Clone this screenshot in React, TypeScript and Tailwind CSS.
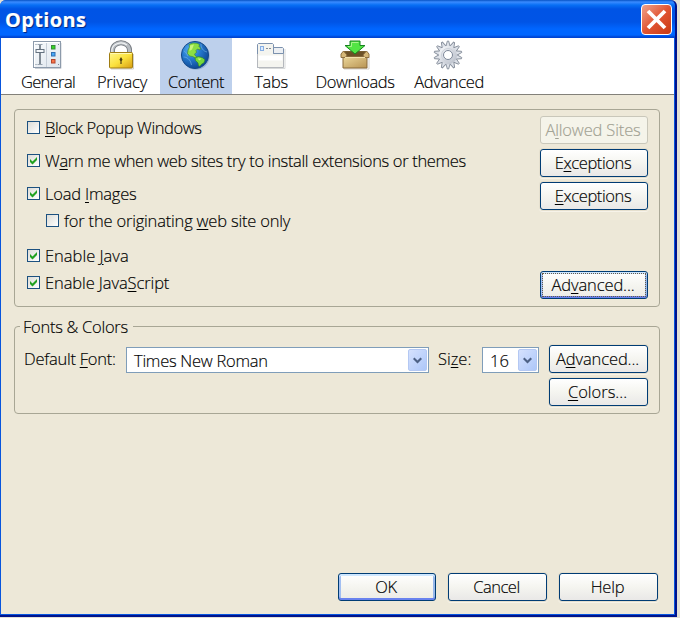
import type { ReactNode } from "react";

function Key({ children }: { children: ReactNode }) {
  return <span className="underline decoration-1 underline-offset-[2px]">{children}</span>;
}

function SlidersIcon() {
  return (
    <svg className="mr-[3px]" width="30" height="30" viewBox="0 0 30 30">
      <defs>
        <linearGradient id="panel" x2="1" y2="1">
          <stop stopColor="#f8fbfd" />
          <stop offset="1" stopColor="#dfe5ec" />
        </linearGradient>
      </defs>
      <path d="M3 28.500h26V3" fill="none" stroke="#ccd0d6" />
      <rect x="1.500" y="1.500" width="27" height="26" fill="url(#panel)" stroke="#8c9aab" />
      <path d="M14.500 2v25" stroke="#c6ced8" />
      <path d="M2.500 2.500h25M2.500 3v24" stroke="#fff" />
      <path d="M8 4v21" stroke="#5c6874" strokeWidth="1.500" />
      <path d="M5.500 4.500h5M5.500 24.500h5" stroke="#97a2ae" />
      <rect x="4" y="9.500" width="8" height="3" fill="#f4f7fa" stroke="#657280" />
      <rect x="19.500" y="5.500" width="3.500" height="3.500" fill="#35d623" stroke="#378b3a" />
      <rect x="19.500" y="12.500" width="3.500" height="3.500" fill="#48a8f6" stroke="#336fb2" />
      <rect x="19.500" y="19.500" width="3.500" height="3.500" fill="#f8744a" stroke="#b4452b" />
      <path d="M3.500 4.500h1M3.500 24.500h1M26 4.500h1M26 24.500h1" stroke="#7c8996" />
    </svg>
  );
}

function PadlockIcon() {
  return (
    <svg className="mr-[2px]" width="26" height="30" viewBox="0 0 26 30">
      <defs>
        <linearGradient id="brass" x2="1" y2="1">
          <stop stopColor="#fff68c" />
          <stop offset=".5" stopColor="#fbe23e" />
          <stop offset="1" stopColor="#d79c12" />
        </linearGradient>
      </defs>
      <path d="M4.500 15v-5a8.500 7.200 0 0 1 17 0v5" fill="none" stroke="#70757b" strokeWidth="5" />
      <path d="M4.500 15v-5a8.500 7.200 0 0 1 17 0v5" fill="none" stroke="#b7bcc1" strokeWidth="3.400" />
      <path d="M3.900 13v-3.500a9 7.500 0 0 1 15-4.500" fill="none" stroke="#f1f3f4" strokeWidth="1.200" />
      <path d="M3 29h22.500V14" fill="none" stroke="#cfcfcb" />
      <rect x="1.500" y="12.500" width="23" height="15.500" rx="1" fill="url(#brass)" stroke="#a07d12" />
      <path d="M2.500 13.500h21" stroke="#fff9b5" />
      <path d="M13 17l1.600 2.700-1 1.300v3h-1.200v-3l-1-1.300z" fill="#493c13" />
    </svg>
  );
}

function GlobeIcon() {
  return (
    <svg className="mr-[2px]" width="30" height="30" viewBox="0 0 30 30">
      <defs>
        <radialGradient id="ocean" cx=".35" cy=".3" r=".75">
          <stop stopColor="#62b8f2" />
          <stop offset=".45" stopColor="#267bd0" />
          <stop offset="1" stopColor="#0c438f" />
        </radialGradient>
      </defs>
      <circle cx="16" cy="16" r="13.800" fill="#7f9cc5" opacity=".6" />
      <circle cx="15" cy="15" r="13.600" fill="url(#ocean)" stroke="#174b8b" />
      <path d="M3.500 17c3 0 7 2 8 8M21 4c0 4 2 7 6 8M4 11c2 1 3 3 4 5" fill="none" stroke="#79b9e8" opacity=".6" />
      <path d="M9 4.500l4-1.500 4 .3 2.500 1.200-.5 2 1.500 1.500-.5 2-2.500-1-1.500 1.500.5 2-2 1.500 1 2 2 1.500-1.500.8-3.500-1.800-3-.5-2-2.500.5-3.500 1.500-3z" fill="#8cdf45" stroke="#39852a" strokeWidth=".6" />
      <path d="M15 18l3.500-1.500 4 1.200 2.500 2-1 3-2.500 1.500-1.500 2-1.500-.2-.5-3-2.500-2.500z" fill="#77d83a" stroke="#297c28" strokeWidth=".6" />
      <path d="M10 5.500l4-1-2 5-2.500 1.500zM17.500 18.500l4 0-2 2z" fill="#c7f57b" />
    </svg>
  );
}

function TabsIcon() {
  return (
    <svg className="mt-[2px] mr-px" width="30" height="28" viewBox="0 2 30 28">
      <path d="M3 28.500h26V9" fill="none" stroke="#d7d9d9" />
      <path d="M1.500 27.500v-23l1-1h14l1 1v3h10v20z" fill="#f4f4ef" />
      <path d="M1.500 27.500v-23l1-1h14l1 1v9h10" fill="none" stroke="#7b91ae" />
      <path d="M17.500 7.500h9l1 1v5h-10z" fill="#eceff3" stroke="#7b91ae" />
      <path d="M1.500 14v13.500h26V14" fill="none" stroke="#b5b8bd" />
      <path d="M2.500 15.500h24v5h-24z" fill="#fff" />
      <rect x="4.500" y="6.500" width="3" height="4" fill="#dcecff" stroke="#86aee4" />
      <path d="M10 8.500h2m1 0h2" stroke="#858e9a" />
    </svg>
  );
}

function DownloadIcon() {
  return (
    <svg className="mr-px" width="32" height="30" viewBox="0 0 32 30">
      <defs>
        <linearGradient id="carton" x2="1" y2="1">
          <stop stopColor="#ecd89c" />
          <stop offset="1" stopColor="#b89352" />
        </linearGradient>
      </defs>
      <path d="M5 29h25V17" fill="none" stroke="#d6d2cb" />
      <path d="M4.500 11.500h23l-1 5h-21z" fill="#6c5127" stroke="#795d31" />
      <path d="M4 16.500h24V28H4z" fill="url(#carton)" stroke="#87683a" />
      <path d="M4.500 11l-2.500 3v3.500h4.500l1.500-2.500zM27.500 11l2.500 3v3.500h-4.500l-1.500-2.500z" fill="#d6b878" stroke="#8f7041" />
      <path d="M6 17.500h20" stroke="#f3e1ad" />
      <path d="M11 1h10v4.500h5L16 14 6 5.500h5z" fill="#52e544" stroke="#178420" />
      <path d="M12.500 2.500h7M9 6.500h3.500v-4" fill="none" stroke="#a7f48c" />
    </svg>
  );
}

function GearIcon() {
  return (
    <svg className="mr-[2px]" width="30" height="30" viewBox="0 0 30 30">
      <defs>
        <linearGradient id="steel" x2="1" y2="1">
          <stop stopColor="#fafbfd" />
          <stop offset="1" stopColor="#b4bac6" />
        </linearGradient>
      </defs>
      <g fill="#dde1e8" stroke="#858d9a" strokeWidth=".9">
        {[0, 25.7, 51.4, 77.1, 102.9, 128.6, 154.3, 180, 205.7, 231.4, 257.1, 282.9, 308.6, 334.3].map((angle) => (
          <path key={angle} d="M12.800 6.300l1.600-5.300h1.200l1.600 5.300" transform={`rotate(${angle} 15 15)`} />
        ))}
      </g>
      <circle cx="15" cy="15" r="9.200" fill="url(#steel)" />
      <circle cx="15" cy="15" r="6.500" fill="none" stroke="#ccd1da" />
      <circle cx="15" cy="15" r="4.500" fill="#fff" stroke="#7d8798" />
    </svg>
  );
}

function ToolItem({ icon, label, className, active = false }: { icon: ReactNode; label: string; className: string; active?: boolean }) {
  return (
    <div className={`flex h-[56px] flex-col items-center ${active ? "bg-[#bdd0ec]" : ""} ${className}`}>
      <div className="flex h-[33px] items-center">{icon}</div>
      <div className="whitespace-nowrap leading-[22px]">{label}</div>
    </div>
  );
}

function Check({ checked = false, className = "", children }: { checked?: boolean; className?: string; children: ReactNode }) {
  return (
    <label className={`flex h-[13px] items-start gap-[5px] ${className}`}>
      <span className="flex size-[13px] shrink-0 items-center justify-center border border-[#1c5180] bg-linear-to-br from-[#dcdcd7] to-white">
        {checked && (
          <svg width="9" height="9" viewBox="0 0 9 9">
            <path d="M1 3v3l2.500 2.500L8 4V1L3.500 5.500z" fill="#21a121" />
          </svg>
        )}
      </span>
      <span className="whitespace-nowrap leading-[13px]">{children}</span>
    </label>
  );
}

function Button({ children, className = "", kind = "normal" }: { children: ReactNode; className?: string; kind?: "normal" | "default" | "focused" | "disabled" }) {
  const look = {
    normal: "border-[#003c74] bg-linear-to-b from-white via-[#f5f5f0] to-[#e9e8e7] shadow-[0_0_0_1px_#e5dfce,0_1px_0_1px_#f7f3e9]",
    default: "border-[#003c74] bg-linear-to-b from-white via-[#f5f5f0] to-[#ecebe6] shadow-[inset_0_2px_0_#cee7ff,inset_0_-2px_0_#6982ee,inset_2px_0_0_#a2bff2,inset_-2px_0_0_#98b8ea]",
    focused: "border-[#003c74] bg-linear-to-b from-white via-[#f5f5f0] to-[#ecebe6] shadow-[inset_0_2px_0_#cee7ff,inset_0_-2px_0_#6982ee,inset_2px_0_0_#a2bff2,inset_-2px_0_0_#98b8ea]",
    disabled: "border-[#c9c7ba] bg-[#f5f4ea] text-[#a1a192]",
  }[kind];
  return (
    <button className={`flex h-[28px] shrink-0 rounded-[3px] border p-px ${look} ${className}`}>
      <span className={`flex h-full w-full items-center justify-center pr-[2px] whitespace-nowrap leading-none ${kind === "focused" ? "border border-dotted border-[#655b4b]" : ""}`}>
        <span>{children}</span>
      </span>
    </button>
  );
}

function Combo({ value, className, textClass }: { value: string; className: string; textClass: string }) {
  return (
    <div className={`flex h-[26px] shrink-0 border border-[#7f9db9] bg-white p-px ${className}`}>
      <span className={`grow whitespace-nowrap leading-[23px] ${textClass}`}>{value}</span>
      <span className="flex h-[22px] w-[19px] items-center justify-center rounded-[2px] border border-[#b4c8f3] bg-linear-to-br from-[#d5e1fd] to-[#adc7f9]">
        <svg width="9" height="7" viewBox="0 0 9 7">
          <path d="M.7 1.200l3.800 3.800 3.800-3.800" fill="none" stroke="#4d6185" strokeWidth="2.200" />
        </svg>
      </span>
    </div>
  );
}

export default function App() {
  return (
    <div className="h-[618px] w-[680px] overflow-hidden bg-[#e3e0d5] font-['Open_Sans','Noto_Sans',sans-serif] text-[16.5px] font-light text-black [-webkit-text-stroke:0.15px]">
      <div className="flex h-[617px] w-[677px] flex-col rounded-t-[6px] border-r-2 border-b-2 border-[#00138c] bg-[#0855dd]">
        <header className="flex h-[38px] shrink-0 items-start justify-between rounded-t-[6px] bg-[linear-gradient(#0753c5_0px,#3a8bff_2px,#0870f5_5px,#0054e5_9px,#0054e6_22px,#0066ff_29px,#0066ff_35px,#0045d3_37px)] pl-[5px] pr-[3px]">
          <h1 className="text-[20px] leading-[40px] font-bold tracking-[0.35px] text-white [text-shadow:1px_1px_1px_#00247c]">Options</h1>
          <button aria-label="Close" className="mt-1 flex size-[31px] items-center justify-center rounded-[4px] border border-white bg-linear-to-br from-[#eda18b] via-[#e15432] to-[#c93a12]">
            <svg width="21" height="21" viewBox="0 0 21 21">
              <path d="M2 2l17 17M19 2L2 19" stroke="#fff" strokeWidth="3.800" />
            </svg>
          </button>
        </header>
        <main className="mr-px mb-px ml-px flex grow flex-col bg-[#ede8d8]">
          <nav className="flex h-[57px] shrink-0 border-b border-[#83817a] bg-white pl-[11px]">
            <ToolItem className="w-[72px] tracking-[-0.65px]" icon={<SlidersIcon />} label="General" />
            <ToolItem className="ml-0.5 w-[72px] tracking-[-0.2px]" icon={<PadlockIcon />} label="Privacy" />
            <ToolItem className="ml-0.5 w-[72px] tracking-[-0.5px]" icon={<GlobeIcon />} label="Content" active />
            <ToolItem className="ml-0.5 w-[74px] tracking-[-0.3px]" icon={<TabsIcon />} label="Tabs" />
            <ToolItem className="w-[94px] tracking-[-0.4px]" icon={<DownloadIcon />} label="Downloads" />
            <ToolItem className="ml-0.5 w-[90px] tracking-[-0.35px]" icon={<GearIcon />} label="Advanced" />
          </nav>

          <section className="mt-[14px] ml-[13px] h-[198px] w-[646px] rounded-[4px] border border-[#a8a695] pt-[6px] pr-[11px] pl-3">
            <div className="flex h-[33px] justify-between">
              <Check className="mt-[5px] tracking-[-0.4px]"><Key>B</Key>lock Popup Windows</Check>
              <Button kind="disabled" className="w-[108px] tracking-[-0.15px]">A<Key>l</Key>lowed Sites</Button>
            </div>
            <div className="flex h-[33px] justify-between">
              <Check checked className="mt-[5px] tracking-[-0.34px]">W<Key>a</Key>rn me when web sites try to install extensions or themes</Check>
              <Button className="w-[108px] tracking-[-0.4px]">E<Key>x</Key>ceptions</Button>
            </div>
            <div className="flex h-8 justify-between">
              <Check checked className="mt-[5px] tracking-[-0.2px]">Load <Key>I</Key>mages</Check>
              <Button className="w-[108px] tracking-[-0.4px]"><Key>E</Key>xceptions</Button>
            </div>
            <div className="h-[35px] pl-[19px]">
              <Check className="tracking-[-0.19px]">for the originating <Key>w</Key>eb site only</Check>
            </div>
            <div className="h-[22px]">
              <Check checked>Enable <Key>J</Key>ava</Check>
            </div>
            <div className="flex justify-between">
              <Check checked className="mt-[5px] tracking-[-0.1px]">Enable Java<Key>S</Key>cript</Check>
              <Button kind="focused" className="w-[108px] tracking-[-0.1px]">Ad<Key>v</Key>anced...</Button>
            </div>
          </section>

          <fieldset className="mt-[9px] ml-[13px] h-[98px] w-[646px] rounded-[4px] border border-[#a8a695] pr-[10px] pl-[9px]">
            <legend className="-ml-[4px] h-5 pr-[5px] pl-[3px] leading-[22px] tracking-[-0.27px] whitespace-nowrap">Fonts &amp; Colors</legend>
            <div className="mt-[9px] flex items-start">
              <span className="w-[102px] whitespace-nowrap leading-[28px] tracking-[-0.25px]">Default <Key>F</Key>ont:</span>
              <Combo className="mt-0.5 w-[303px] tracking-[-0.27px]" textClass="pl-[6px]" value="Times New Roman" />
              <span className="ml-[9px] w-[44px] whitespace-nowrap leading-[28px]">Si<Key>z</Key>e:</span>
              <Combo className="mt-0.5 w-[57px]" textClass="pl-[6px]" value="16" />
              <div className="ml-[10px] flex flex-col gap-[5px]">
                <Button className="w-[99px] tracking-[-0.1px]">A<Key>d</Key>vanced...</Button>
                <Button className="w-[99px]"><Key>C</Key>olors...</Button>
              </div>
            </div>
          </fieldset>

          <footer className="mt-auto mr-4 mb-[13px] flex justify-end">
            <Button kind="default" className="w-[98px] tracking-[-0.4px]">OK</Button>
            <Button className="ml-3 w-[99px] tracking-[-0.5px]">Cancel</Button>
            <Button className="ml-3 w-[99px] tracking-[-0.2px]">Help</Button>
          </footer>
        </main>
      </div>
    </div>
  );
}
